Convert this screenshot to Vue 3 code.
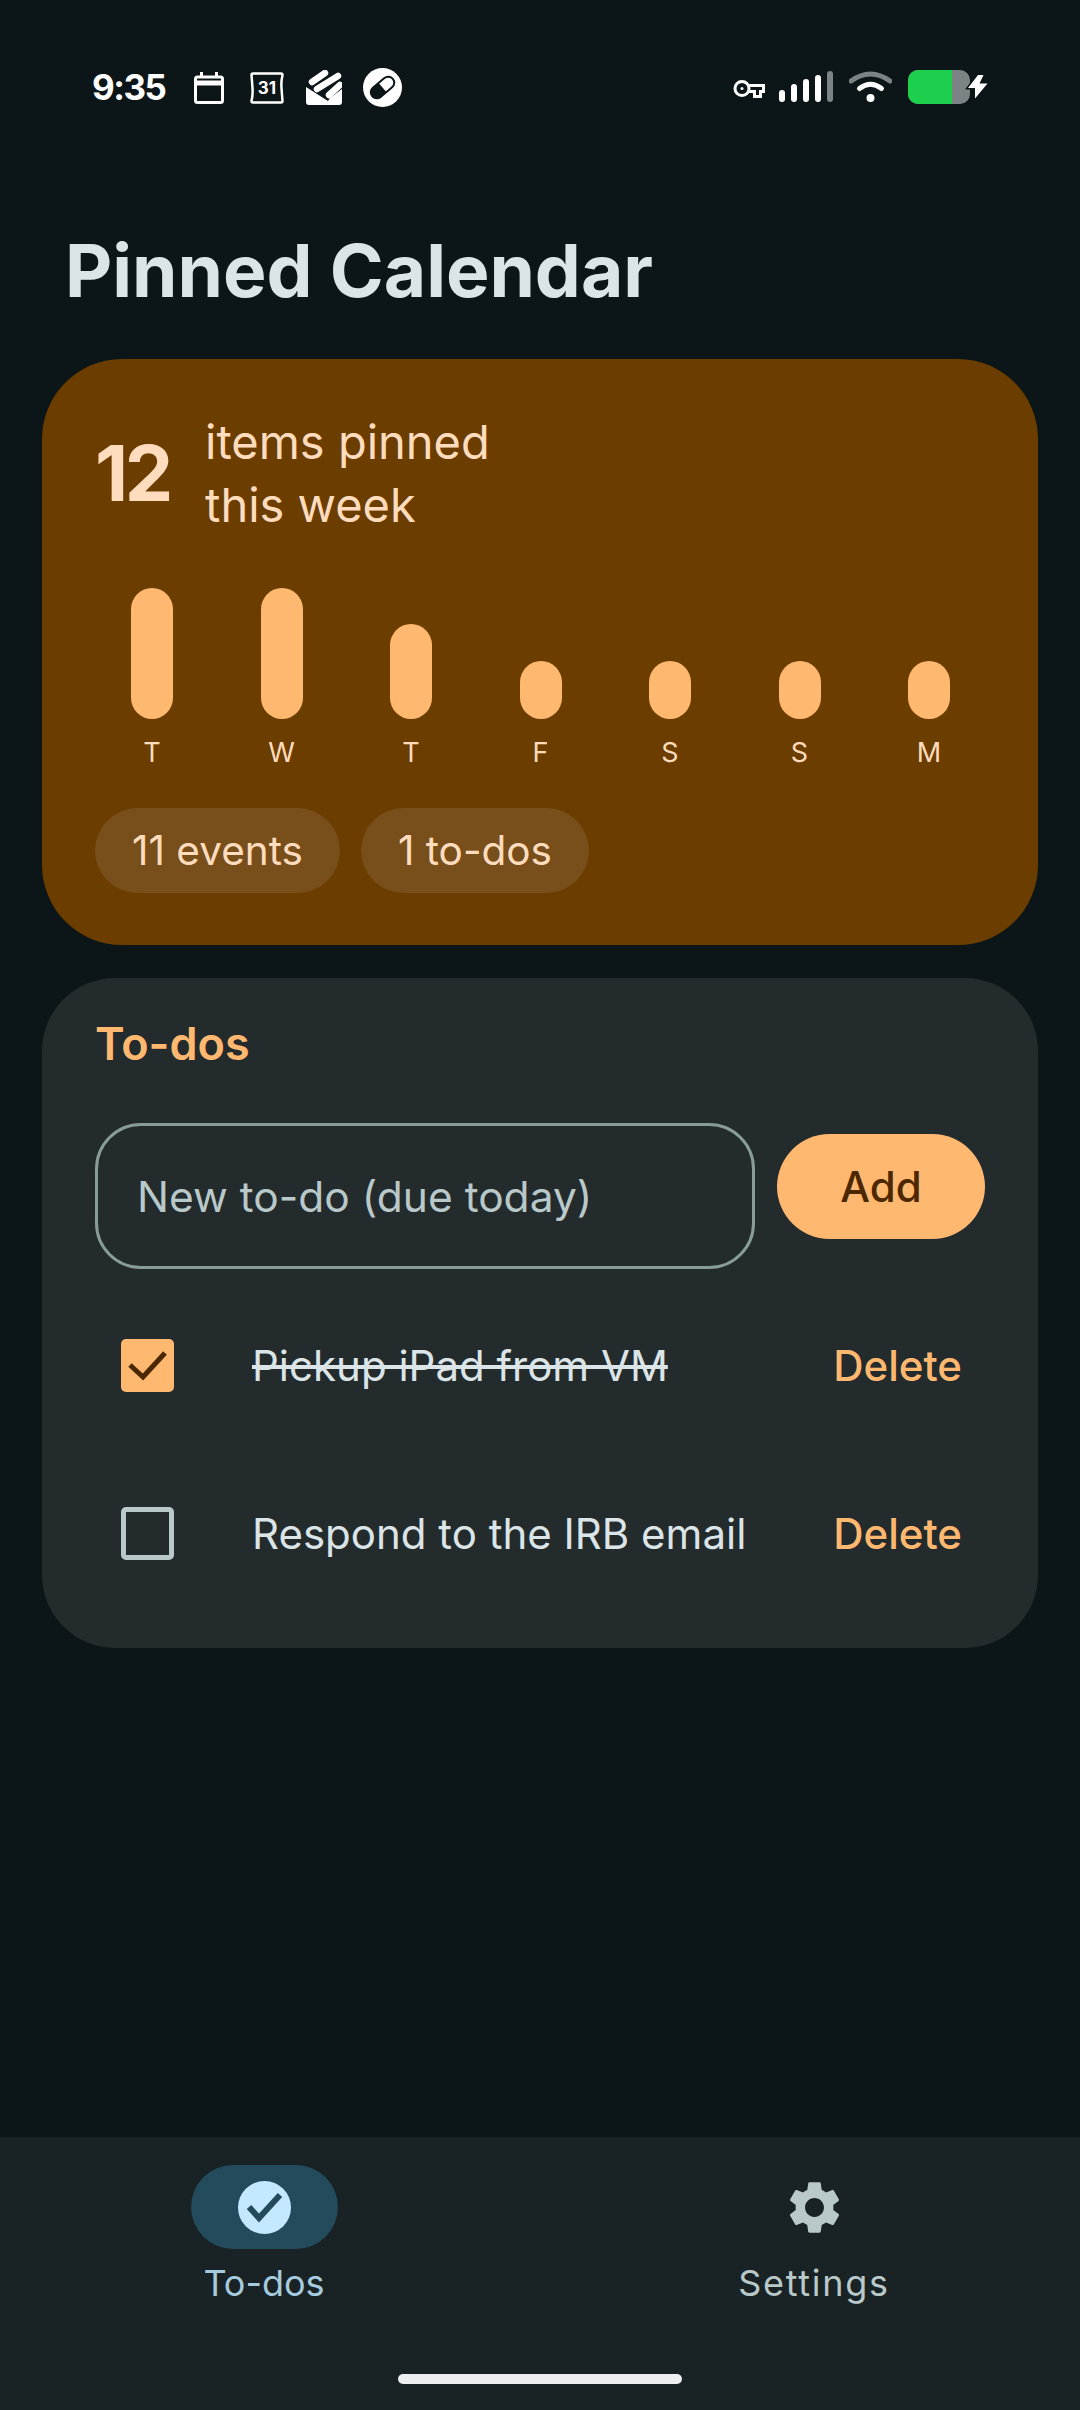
<template>
  <div class="screen">
    <div class="status-bar">
      <span class="time">9:35</span>
      <svg class="ic-cal" width="30" height="32" viewBox="0 0 30 32" fill="none" stroke="#fff" stroke-width="3">
        <rect x="1.5" y="5" width="27" height="25.5" rx="2" />
        <path d="M1.5 11h27" stroke-width="5" />
        <path d="M7.5 0v6M22.5 0v6" />
      </svg>
      <svg class="ic-31" width="34" height="32" viewBox="0 0 34 32" fill="none">
        <path d="M3 1.5h28q1.5 0 1.5 1.5q-1.5 6 -1 13t1 13q0 1.5 -1.5 1.5h-28q-1.5 0 -1.5-1.500q1.500-6 1-13t-1-13q0-1.500 1.500-1.500z" stroke="#fff" stroke-width="2.500" />
        <text x="17" y="22" text-anchor="middle" class="ic-31-text">31</text>
      </svg>
      <svg class="ic-stack" width="36" height="36" viewBox="0 0 36 36" fill="#fff" stroke="none">
        <path d="M6 12 19 3M11 19 32 6M23 25 34 15" stroke="#fff" stroke-width="6.500" stroke-linecap="round" />
        <path d="M0 17 22 31 24 28 36 19V32q0 3-3 3H3q-3 0-3-3z" />
      </svg>
      <svg class="ic-pill" width="39" height="39" viewBox="0 0 39 39">
        <circle cx="19.500" cy="19.500" r="19.500" fill="#fff" />
        <g transform="rotate(-40 19.500 19.500)">
          <rect x="6" y="13.500" width="27" height="12" rx="6" fill="#fff" stroke="#0c1517" stroke-width="2" />
          <path d="M19.500 13.500h-7.500a6 6 0 0 0 0 12h7.500z" fill="#0c1517" />
        </g>
      </svg>
      <div class="status-right">
        <svg width="32" height="20" viewBox="0 0 32 20" fill="none" stroke="#fff" stroke-width="3">
          <circle cx="9" cy="9.500" r="7" />
          <path d="M16 6.500h14.500v6h-3v5h-6v-5H16" />
          <circle cx="9" cy="9.500" r="1.500" fill="#fff" stroke="none" />
        </svg>
        <div class="signal">
          <i v-for="(h, i) in signal" :key="i" :class="{ off: i === 4 }" :style="{ height: h + 'px' }"></i>
        </div>
        <svg width="43" height="32" viewBox="0 0 43 32" fill="none" stroke-linecap="round">
          <path d="M2 11Q21.500-3 41 11" stroke="#7c8384" stroke-width="5" />
          <path d="M10.500 18.500Q21.500 10 32.500 18.500" stroke="#fff" stroke-width="5" />
          <circle cx="21.500" cy="28" r="4" fill="#fff" />
        </svg>
        <div class="battery"><div class="battery-fill"></div></div>
        <svg class="bolt" width="24" height="26" viewBox="0 0 24 26">
          <path d="M13 1 3 14h7v10.500L22.500 9.500h-8L18.500 1z" fill="#fff" stroke="#0c1517" stroke-width="3" paint-order="stroke" />
        </svg>
      </div>
    </div>

    <main class="content">
      <h1 class="title">Pinned Calendar</h1>

      <section class="hero">
        <div class="hero-head">
          <span class="hero-count">12</span>
          <span class="hero-text">items pinned<br />this week</span>
        </div>
        <div class="bars">
          <div v-for="(d, i) in days" :key="i" class="bar-col">
            <div class="bar" :style="{ height: d.h + 'px' }"></div>
            <span class="bar-label">{{ d.label }}</span>
          </div>
        </div>
        <div class="chips">
          <span class="chip">11 events</span>
          <span class="chip">1 to-dos</span>
        </div>
      </section>

      <section class="todos">
        <h2>To-dos</h2>
        <div class="add-row">
          <input class="todo-input" placeholder="New to-do (due today)" />
          <button class="add-btn">Add</button>
        </div>
        <div v-for="todo in todos" :key="todo.id" class="todo-row">
          <div class="check" :class="{ on: todo.done }">
            <svg v-if="todo.done" width="53" height="53" viewBox="0 0 53 53" fill="none" stroke="#4b2800" stroke-width="5">
              <polyline points="9,26 22,38 44,14" />
            </svg>
          </div>
          <span class="todo-text" :class="{ done: todo.done }">{{ todo.text }}</span>
          <button class="del-btn">Delete</button>
        </div>
      </section>
    </main>

    <nav class="nav">
      <div class="nav-items">
        <div class="nav-item active">
          <div class="nav-pill">
            <svg width="53" height="53" viewBox="0 0 53 53" fill="none">
              <circle cx="26.500" cy="26.500" r="26.500" fill="#c3e8ff" />
              <polyline points="11,26 21,37 42,14" stroke="#244b5c" stroke-width="6" />
            </svg>
          </div>
          <span>To-dos</span>
        </div>
        <div class="nav-item">
          <div class="nav-pill">
            <svg width="63" height="63" viewBox="0 0 24 24" fill="#b9c8c8">
              <path d="M19.140 12.940c.04-.3.06-.61.06-.94 0-.32-.02-.64-.07-.94l2.030-1.580c.18-.14.23-.41.12-.61l-1.920-3.320c-.12-.22-.37-.29-.59-.22l-2.390.96c-.5-.38-1.030-.7-1.620-.94l-.36-2.540c-.04-.24-.24-.41-.48-.41h-3.840c-.24 0-.43.17-.47.41l-.36 2.540c-.59.24-1.130.57-1.620.94l-2.390-.96c-.22-.08-.47 0-.59.22L2.740 8.870c-.12.21-.08.47.12.61l2.030 1.580c-.05.3-.09.63-.09.94s.02.64.07.94l-2.030 1.580c-.18.14-.23.41-.12.61l1.920 3.320c.12.22.37.29.59.22l2.390-.96c.5.38 1.030.7 1.620.94l.36 2.540c.05.24.24.41.48.41h3.840c.24 0 .44-.17.47-.41l.36-2.540c.59-.24 1.130-.56 1.620-.94l2.390.96c.22.08.47 0 .59-.22l1.920-3.320c.12-.22.07-.47-.12-.61l-2.010-1.580zM12 15.600c-1.980 0-3.600-1.620-3.600-3.600s1.620-3.600 3.600-3.600 3.600 1.620 3.600 3.600-1.620 3.600-3.600 3.600z" />
            </svg>
          </div>
          <span class="wide">Settings</span>
        </div>
      </div>
      <div class="home-bar"></div>
    </nav>
  </div>
</template>

<script setup>
import { ref } from 'vue';

const signal = [12, 18, 23, 27, 31];

const days = [
  { label: 'T', h: 131 },
  { label: 'W', h: 131 },
  { label: 'T', h: 95 },
  { label: 'F', h: 58 },
  { label: 'S', h: 58 },
  { label: 'S', h: 58 },
  { label: 'M', h: 58 }
];

const todos = ref([
  { id: 1, text: 'Pickup iPad from VM', done: true },
  { id: 2, text: 'Respond to the IRB email', done: false }
]);
</script>

<style>
body {
  background: #0c1517;
}
</style>

<style scoped>
.screen {
  width: 1080px;
  height: 2410px;
  display: flex;
  flex-direction: column;
  background: #0c1517;
  font-family: Inter, "Open Sans", sans-serif;
  overflow: hidden;
}

.status-bar {
  height: 137px;
  padding: 68px 91px 0 92px;
  box-sizing: border-box;
  display: flex;
  align-items: flex-start;
  color: #fff;
}

.time {
  width: 75px;
  font-size: 35px;
  font-weight: 700;
  line-height: 38px;
  letter-spacing: -1.5px;
  white-space: nowrap;
}

.ic-cal {
  margin: 4px 0 0 27px;
}

.ic-31 {
  margin: 4px 0 0 26px;
}

.ic-31-text {
  font-size: 17px;
  font-weight: 700;
  fill: #fff;
}

.ic-stack {
  margin: 2px 0 0 22px;
}

.ic-pill {
  margin: 0 0 0 21px;
}

.status-right {
  margin-left: auto;
  display: flex;
  align-items: flex-start;
  padding-top: 2px;
}

.status-right > svg:first-child {
  margin-top: 9px;
}

.signal {
  margin-left: 14px;
  height: 32px;
  display: flex;
  align-items: flex-end;
  gap: 6px;
}

.signal i {
  width: 6px;
  border-radius: 3px;
  background: #fff;
}

.signal i.off {
  background: #7c8384;
}

.status-right > svg:nth-child(3) {
  margin-left: 16px;
}

.battery {
  margin-left: 16px;
  width: 62px;
  height: 34px;
  border-radius: 10px;
  background: #7c8384;
  overflow: hidden;
}

.battery-fill {
  width: 44px;
  height: 100%;
  background: #1ccf4c;
}

.bolt {
  margin: 4px 0 0 -5px;
}

.content {
  flex: 1;
  padding: 0 42px;
}

.title {
  margin: 92px 0 46px 23px;
  font-size: 73px;
  line-height: 84px;
  font-weight: 700;
  color: #dbe4e6;
}

.hero {
  height: 586px;
  box-sizing: border-box;
  padding: 51px 54px 0 53px;
  border-radius: 80px;
  background: #6b3e00;
}

.hero-head {
  display: flex;
  align-items: center;
}

.hero-count {
  width: 110px;
  font-size: 77px;
  font-weight: 700;
  letter-spacing: -3.5px;
  color: #ffdcbe;
}

.hero-text {
  font-size: 47px;
  line-height: 63px;
  color: #ffdcbe;
}

.bars {
  margin-top: 52px;
  padding: 0 34px 0 36px;
  display: flex;
  justify-content: space-between;
}

.bar-col {
  width: 42px;
  height: 183px;
  display: flex;
  flex-direction: column;
  justify-content: flex-end;
  align-items: center;
}

.bar {
  width: 42px;
  border-radius: 21px;
  background: #ffb870;
}

.bar-label {
  margin-top: 16px;
  font-size: 27px;
  line-height: 36px;
  color: #ffdcbe;
}

.chips {
  margin-top: 37px;
  display: flex;
  gap: 21px;
}

.chip {
  height: 85px;
  padding: 0 37px;
  border-radius: 43px;
  display: flex;
  align-items: center;
  font-size: 40.500px;
  color: #ffdcbe;
  background: #784f1a;
}

.todos {
  margin-top: 33px;
  height: 670px;
  box-sizing: border-box;
  padding: 41px 53px 0;
  border-radius: 73px;
  background: #232b2d;
}

.todos h2 {
  margin: 0;
  font-size: 45px;
  line-height: 50px;
  font-weight: 600;
  color: #ffb870;
}

.add-row {
  margin: 54px 0 12px;
  display: flex;
  align-items: flex-start;
  gap: 22px;
}

.todo-input {
  width: 660px;
  height: 146px;
  box-sizing: border-box;
  padding: 0 39px;
  border: 3px solid #889c98;
  border-radius: 46px;
  background: transparent;
  font-family: inherit;
  font-size: 42.500px;
  outline: none;
}

.todo-input::placeholder {
  color: #b9c8c8;
  opacity: 1;
}

.add-btn {
  margin-top: 11px;
  width: 208px;
  height: 105px;
  border: none;
  border-radius: 53px;
  background: #ffb870;
  color: #4b2800;
  font-family: inherit;
  font-size: 42px;
  font-weight: 500;
}

.todo-row {
  height: 168px;
  display: flex;
  align-items: center;
}

.check {
  width: 53px;
  height: 53px;
  margin-left: 26px;
  box-sizing: border-box;
  border: 5px solid #b9c8c8;
  border-radius: 5px;
  flex-shrink: 0;
}

.check.on {
  border: none;
  background: #ffb870;
}

.todo-text {
  flex: 1;
  margin-left: 78px;
  font-size: 42px;
  color: #dbe4e6;
  white-space: nowrap;
}

.todo-text.done {
  text-decoration: line-through;
}

.del-btn {
  margin-right: 23px;
  padding: 0;
  border: none;
  background: none;
  font-family: inherit;
  font-size: 42px;
  font-weight: 500;
  color: #ffb870;
}

.nav {
  height: 273px;
  box-sizing: border-box;
  padding-top: 28px;
  background: #192224;
  display: flex;
  flex-direction: column;
  align-items: center;
}

.nav-items {
  width: 100%;
  box-sizing: border-box;
  padding: 0 171px 0 169px;
  display: flex;
  justify-content: space-between;
}

.nav-item {
  width: 190px;
  display: flex;
  flex-direction: column;
  align-items: center;
  font-size: 36px;
  line-height: 44px;
  color: #b9c8c8;
}

.nav-item span {
  margin-top: 12px;
}

.nav-item span.wide {
  letter-spacing: 1.700px;
}

.nav-item.active {
  color: #a6cbdf;
}

.nav-pill {
  width: 147px;
  height: 84px;
  border-radius: 42px;
  display: flex;
  align-items: center;
  justify-content: center;
}

.active .nav-pill {
  background: #244b5c;
}

.home-bar {
  margin-top: 69px;
  width: 284px;
  height: 10px;
  border-radius: 5px;
  background: #eceff0;
}
</style>
